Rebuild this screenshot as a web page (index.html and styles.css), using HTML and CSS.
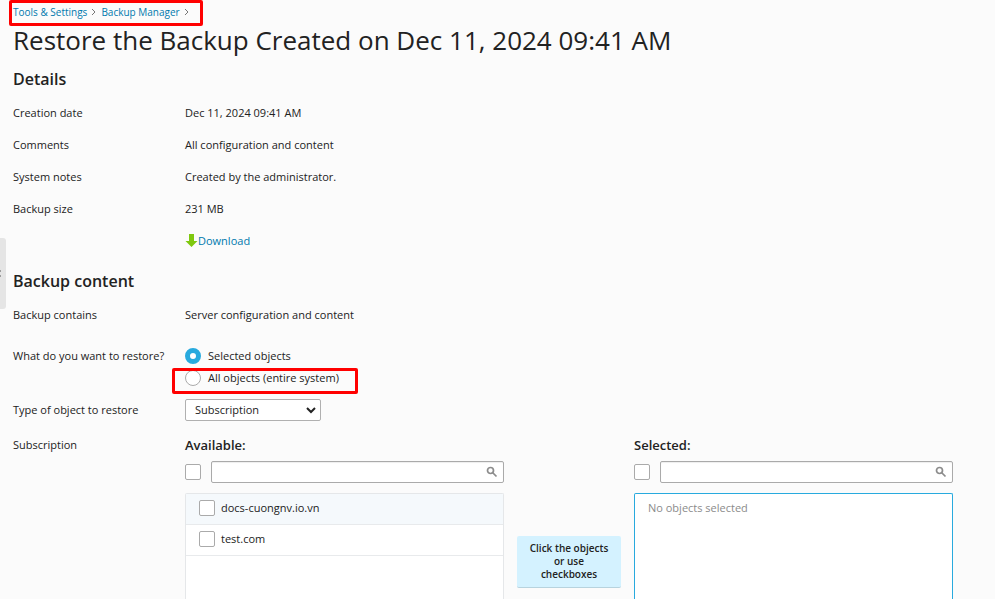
FILE: index.html
```html
<!DOCTYPE html>
<html lang="en">
<head>
<meta charset="utf-8">
<title>Restore the Backup</title>
<link rel="stylesheet" href="styles.css">
</head>
<body>
<button class="sidebar-handle" type="button" aria-label="Show sidebar">
  <svg width="2" height="7" viewBox="0 0 2 7"><path d="M0 1h1M0 6h1" stroke="#555"/></svg>
</button>
<main class="page">
  <nav class="breadcrumbs marked" aria-label="Breadcrumbs">
    <a href="#">Tools &amp; Settings</a>
    <svg class="chevron" viewBox="0 0 6 8"><path d="M1 1l3 3-3 3"/></svg>
    <a href="#">Backup Manager</a>
    <svg class="chevron" viewBox="0 0 6 8"><path d="M1 1l3 3-3 3"/></svg>
  </nav>
  <h1>Restore the Backup Created on Dec 11, 2024 09:41 AM</h1>

  <section>
    <h2>Details</h2>
    <dl class="details">
      <div class="row"><dt>Creation date</dt><dd>Dec 11, 2024 09:41 AM</dd></div>
      <div class="row"><dt>Comments</dt><dd>All configuration and content</dd></div>
      <div class="row"><dt>System notes</dt><dd>Created by the administrator.</dd></div>
      <div class="row"><dt>Backup size</dt><dd>231 MB</dd></div>
      <div class="row"><dt></dt><dd><a class="download" href="#"><svg width="13" height="14" viewBox="0 0 13 14"><path d="M4 0h5v7h3.500L6.500 13 .5 7H4z" fill="#7fc80f"/></svg>Download</a></dd></div>
    </dl>
  </section>

  <section class="content">
    <h2>Backup content</h2>
    <dl class="details">
      <div class="row"><dt>Backup contains</dt><dd>Server configuration and content</dd></div>
    </dl>
    <div class="field" role="radiogroup" aria-labelledby="what">
      <span class="field-label" id="what">What do you want to restore?</span>
      <div class="options">
        <label class="option"><input type="radio" name="scope" checked>Selected objects</label>
        <label class="option marked"><input type="radio" name="scope">All objects (entire system)</label>
      </div>
    </div>
    <div class="field">
      <label class="field-label" for="type">Type of object to restore</label>
      <div class="select">
        <select id="type"><option>Subscription</option></select>
        <svg width="10" height="7" viewBox="0 0 10 7"><path d="M1 1l4 4 4-4" fill="none" stroke="#222" stroke-width="2"/></svg>
      </div>
    </div>
    <div class="field picker-field">
      <span class="field-label">Subscription</span>
      <div class="picker">
        <div class="pane">
          <h3>Available:</h3>
          <div class="search">
            <input type="checkbox" aria-label="Select all available">
            <div class="search-box">
              <input type="text" aria-label="Search available">
              <svg width="12" height="12" viewBox="0 0 12 12"><circle cx="4.500" cy="4.500" r="3"/><path d="M7 7l3.500 3.500"/></svg>
            </div>
          </div>
          <div class="list">
            <label class="item highlighted"><input type="checkbox">docs-cuongnv.io.vn</label>
            <label class="item"><input type="checkbox">test.com</label>
          </div>
        </div>
        <div class="hint">Click the objects or use checkboxes</div>
        <div class="pane">
          <h3>Selected:</h3>
          <div class="search">
            <input type="checkbox" aria-label="Select all selected">
            <div class="search-box">
              <input type="text" aria-label="Search selected">
              <svg width="12" height="12" viewBox="0 0 12 12"><circle cx="4.500" cy="4.500" r="3"/><path d="M7 7l3.500 3.500"/></svg>
            </div>
          </div>
          <div class="list target"><p class="empty">No objects selected</p></div>
        </div>
      </div>
    </div>
  </section>
</main>
</body>
</html>
```
FILE: styles.css
```css
* { box-sizing: border-box; }

body {
  margin: 0;
  height: 100vh;
  overflow: hidden;
  background: #fbfbfb;
  color: #222;
  font: 11px/16px "Open Sans", sans-serif;
}

h1, h2, h3, p, dl, dd { margin: 0; }
a { color: #0079ad; text-decoration: none; }
input, select, button { font: inherit; color: inherit; margin: 0; }

.page {
  display: flex;
  flex-direction: column;
  height: 100%;
  padding: 4px 42px 0 13px;
}

.sidebar-handle {
  position: absolute;
  left: 0;
  top: 238px;
  width: 6px;
  height: 71px;
  padding: 0;
  border: 0;
  border-radius: 0 3px 3px 0;
  background: #e5e5e5;
}
.sidebar-handle svg { display: block; }

/* Red call-out frames */
.marked { position: relative; }
.marked::after {
  content: "";
  position: absolute;
  border: 3px solid #f00;
  border-radius: 2px;
  pointer-events: none;
}

.breadcrumbs {
  display: flex;
  align-items: center;
  align-self: flex-start;
  font-size: 10px;
}
.breadcrumbs::after { inset: -4px -9px -6px -4px; }
.chevron {
  width: 6px;
  height: 8px;
  margin: 0 4px;
  fill: none;
  stroke: #777;
}

h1 { margin-top: 3px; font-size: 26px; line-height: 34px; font-weight: 400; }
h2 { margin: 10px 0 6px; font-size: 16px; line-height: 24px; font-weight: 600; }
h3 { font-size: 13px; line-height: 16px; font-weight: 600; }

.row, .field { display: grid; grid-template-columns: 172px minmax(0, 1fr); }
.row { padding: 8px 0; }
.download { display: flex; align-items: center; }

.content { display: flex; flex-direction: column; flex: 1; min-height: 0; }
.content h2 { margin-top: 12px; }
.content .details { margin-bottom: 14px; }

.field { align-items: center; margin-bottom: 10px; }
.options { display: grid; justify-items: start; }
.field:has(.options) { align-items: start; }
.field:has(.options) .field-label { line-height: 22px; }
.option { display: flex; align-items: center; gap: 7px; line-height: 22px; }
.option.marked::after { inset: 1px -19px -5px -13px; }

input[type="radio"] {
  appearance: none;
  width: 16px;
  height: 16px;
  border: 1px solid #aaa;
  border-radius: 50%;
  background: #fff;
}
input[type="radio"]:checked { border: 5px solid #28aade; }

.select { position: relative; justify-self: start; }
.select select {
  display: block;
  appearance: none;
  width: 136px;
  height: 22px;
  padding: 0 24px 0 9px;
  border: 1px solid #b0b0b0;
  border-radius: 2px;
  background: #fff;
}
.select svg { position: absolute; right: 5px; top: 8px; pointer-events: none; }

.picker-field { flex: 1; min-height: 0; margin: 6px 0 0; align-items: stretch; }
.picker { display: grid; grid-template-columns: 1fr 104px 1fr; column-gap: 13px; }
.pane { display: flex; flex-direction: column; }

input[type="checkbox"] {
  appearance: none;
  flex: none;
  width: 16px;
  height: 16px;
  border: 1px solid #aaa;
  border-radius: 2px;
  background: #fff;
}
.search { display: flex; align-items: center; gap: 10px; margin: 8px 0 10px; }
.search-box { position: relative; flex: 1; }
.search-box input {
  display: block;
  width: 100%;
  height: 22px;
  padding: 0 24px 0 8px;
  border: 1px solid #aaa;
  border-radius: 2px;
  background: #fff;
  box-shadow: inset 0 1px 1px #eee;
}
.search-box svg {
  position: absolute;
  right: 6px;
  top: 5px;
  fill: none;
  stroke: #8c8c8c;
  stroke-width: 1.7;
}

.list {
  flex: 1;
  border: 1px solid #e5e7e9;
  border-bottom: 0;
  border-radius: 2px 2px 0 0;
  background: #fff;
}
.list.target { border-color: #28aade; }
.item {
  display: flex;
  align-items: center;
  gap: 6px;
  height: 31px;
  padding: 0 13px 2px;
  border-bottom: 1px solid #e8eaec;
}
.item.highlighted { background: #f5f9fc; }
.empty { padding: 6px 13px; color: #8b8b8b; }

.hint {
  align-self: start;
  margin-top: 99px;
  padding: 6px 12px;
  border-bottom: 1px solid #b7d3de;
  border-radius: 2px;
  background: #d4f2ff;
  font-size: 10px;
  line-height: 13px;
  font-weight: 600;
  text-align: center;
}
```
